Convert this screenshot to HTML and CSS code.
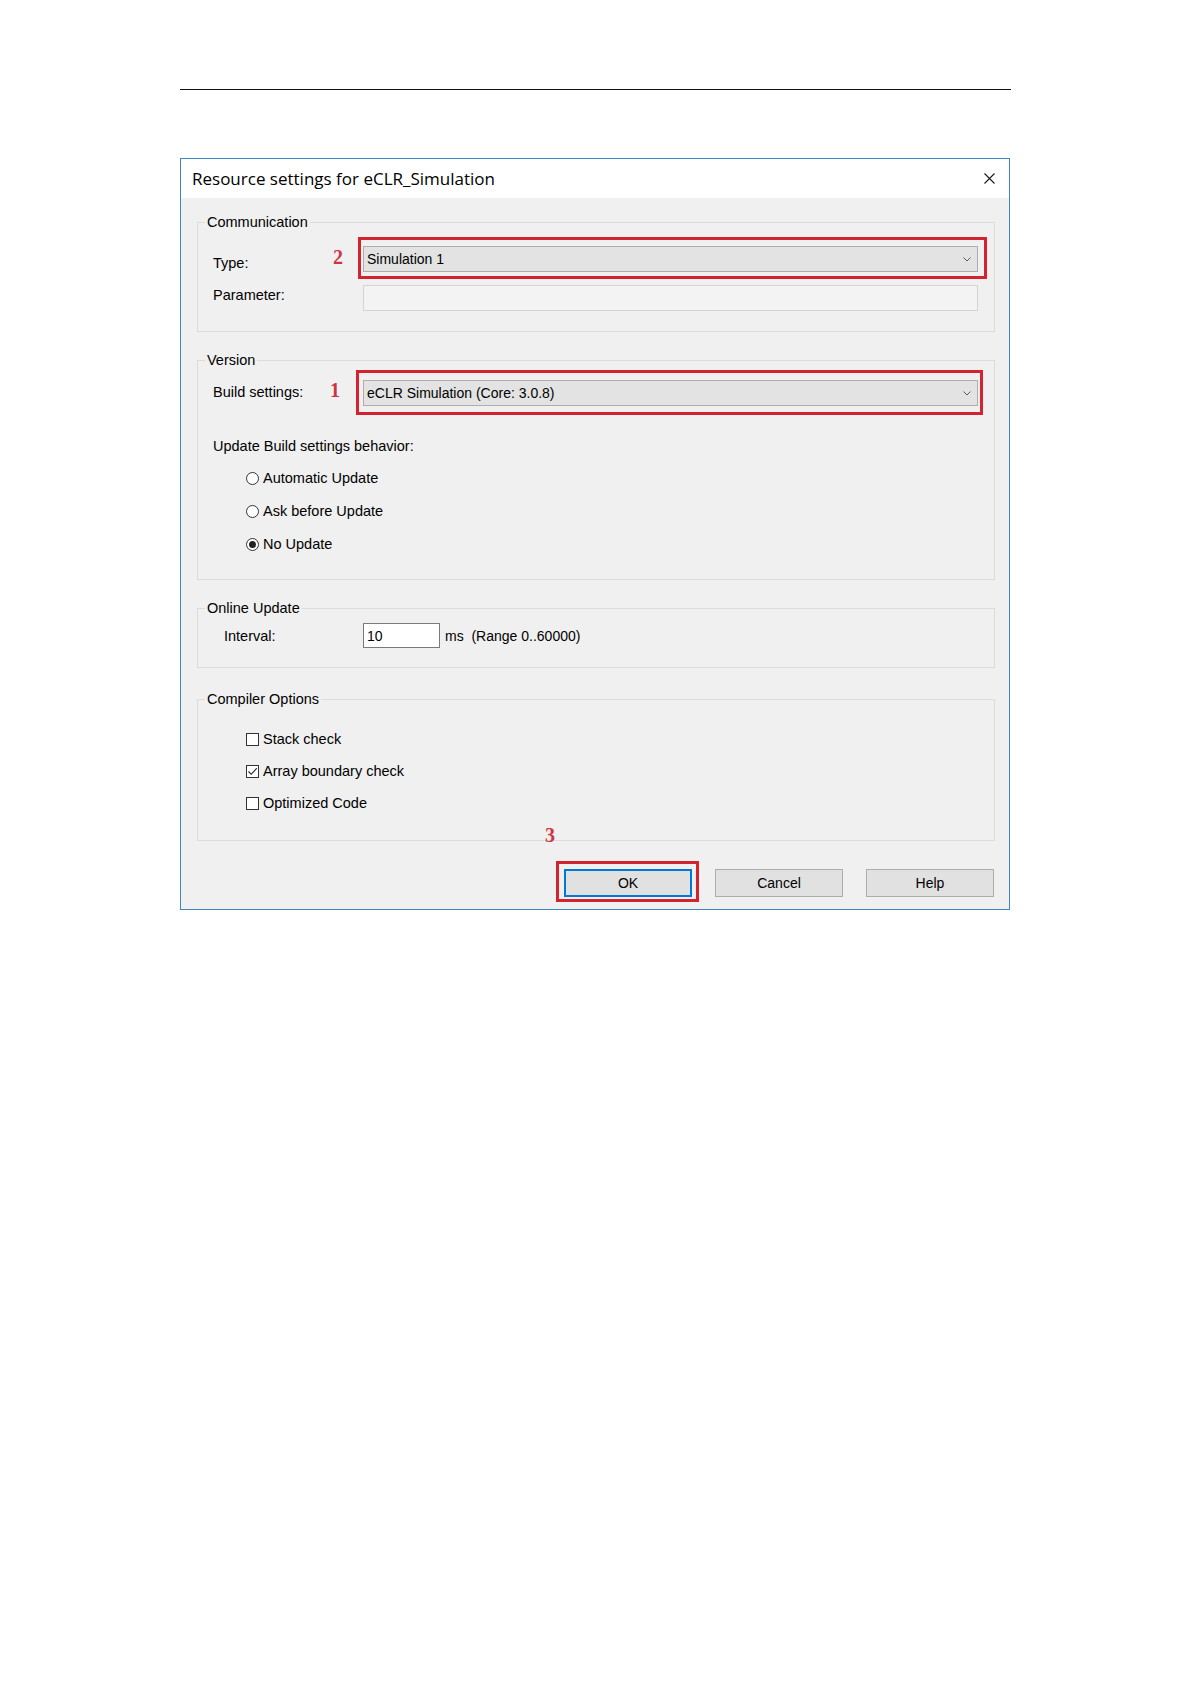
FILE: index.html
```html
<!DOCTYPE html>
<html lang="en">
<head>
    <meta charset="UTF-8">
    <meta name="viewport" content="width=device-width, initial-scale=1.0">
    <title>Resource settings for eCLR_Simulation</title>
    <link rel="stylesheet" href="styles.css">
</head>
<body>
    <div class="page">
        <div class="rule"></div>

        <div class="dialog">
            <div class="titlebar">
                <span class="title">Resource settings for eCLR_Simulation</span>
                <svg class="close" width="11" height="11" viewBox="0 0 11 11">
                    <path d="M0.5 0.5L10.5 10.5M10.5 0.5L0.5 10.5" stroke="#1a1a1a" stroke-width="1.1" fill="none"/>
                </svg>
            </div>

            <div class="content">
                <!-- Communication -->
                <div class="group comm">
                    <div class="legend">Communication</div>
                    <div class="row type-row">
                        <span class="label type-label">Type:</span>
                        <span class="mark mark-2">2</span>
                        <div class="combo callout callout-type">
                            <span>Simulation 1</span>
                            <svg width="8" height="5" viewBox="0 0 8 5"><path d="M0.5 0.5L4 4L7.5 0.5" stroke="#5a5a5a" fill="none"/></svg>
                        </div>
                    </div>
                    <div class="row param-row">
                        <span class="label wide param-label">Parameter:</span>
                        <div class="field"></div>
                    </div>
                </div>

                <!-- Version -->
                <div class="group version">
                    <div class="legend">Version</div>
                    <div class="row build-row">
                        <span class="label build-label">Build settings:</span>
                        <span class="mark mark-1">1</span>
                        <div class="combo callout callout-build">
                            <span>eCLR Simulation (Core: 3.0.8)</span>
                            <svg width="8" height="5" viewBox="0 0 8 5"><path d="M0.5 0.5L4 4L7.5 0.5" stroke="#5a5a5a" fill="none"/></svg>
                        </div>
                    </div>
                    <div class="behavior">Update Build settings behavior:</div>
                    <div class="options radios">
                        <div class="option"><span class="radio"></span>Automatic Update</div>
                        <div class="option"><span class="radio"></span>Ask before Update</div>
                        <div class="option"><span class="radio on"></span>No Update</div>
                    </div>
                </div>

                <!-- Online Update -->
                <div class="group online">
                    <div class="legend">Online Update</div>
                    <div class="row interval-row">
                        <span class="label interval-label">Interval:</span>
                        <input class="num" type="text" value="10" readonly>
                        <span class="unit">ms&nbsp;&nbsp;(Range 0..60000)</span>
                    </div>
                </div>

                <!-- Compiler Options -->
                <div class="group compiler">
                    <div class="legend">Compiler Options</div>
                    <div class="options checks">
                        <div class="option"><span class="check"></span>Stack check</div>
                        <div class="option">
                            <span class="check">
                                <svg width="11" height="11" viewBox="0 0 11 11"><path d="M1.5 5.5L4.2 8.3L9.8 2.2" stroke="#222" stroke-width="1.1" fill="none"/></svg>
                            </span>Array boundary check
                        </div>
                        <div class="option"><span class="check"></span>Optimized Code</div>
                    </div>
                </div>

                <div class="buttons">
                    <div class="btn default callout callout-ok">
                        <span class="mark mark-3">3</span>
                        OK
                    </div>
                    <div class="btn">Cancel</div>
                    <div class="btn">Help</div>
                </div>
            </div>
        </div>
    </div>
</body>
</html>
```

FILE: styles.css
```css
body {
    margin: 0;
    background: #fff;
    font-family: "Liberation Sans", Arial, sans-serif;
    font-size: 14.5px;
    line-height: 17px;
    color: #000;
}

.page {
    width: 831px;
    margin-left: 180px;
    padding-top: 89px;
}

.rule {
    height: 1px;
    background: #111;
}

.dialog {
    box-sizing: border-box;
    width: 830px;
    margin-top: 68px;
    border: 1px solid #3f86c4;
    background: #f0f0f0;
}

.titlebar {
    height: 39px;
    background: #fff;
    display: flex;
    align-items: center;
    justify-content: space-between;
    padding: 0 14px 0 11px;
}

.title {
    font-family: "Open Sans", "Noto Sans", sans-serif;
    font-size: 17px;
    color: #000;
}

.content {
    padding: 24px 14px 12px 16px;
}

/* group boxes */
.group {
    border: 1px solid #dcdcdc;
    padding: 0 16px 0 15px;
}

.legend {
    display: block;
    width: max-content;
    margin: -9px 0 0 -8px;
    padding: 0 2px;
    background: #f0f0f0;
}

.comm { padding-bottom: 20px; }
.version { margin-top: 28px; padding-bottom: 26px; }
.online { margin-top: 28px; padding-bottom: 19px; }
.compiler { margin-top: 31px; padding-bottom: 28px; }

.row {
    display: flex;
    align-items: flex-start;
}

.type-row { margin-top: 15px; }
.param-row { margin-top: 13px; }
.build-row { margin-top: 11px; }
.interval-row { margin-top: 6px; }

.label {
    flex: none;
    width: 120px;
}

.label.wide { width: 150px; }

.type-label { padding-top: 9px; }
.param-label { padding-top: 2px; }
.build-label { padding-top: 4px; }

.interval-label {
    width: 139px;
    margin-left: 11px;
    padding-top: 5px;
}

/* red annotation numbers */
.mark {
    flex: none;
    width: 30px;
    font-family: "Liberation Serif", "Times New Roman", serif;
    font-size: 20px;
    font-weight: bold;
    line-height: 26px;
    color: #cf3440;
}

.mark-2 { margin-top: -2px; }

.mark-1 {
    width: 33px;
    margin: -3px 0 0 -3px;
}

.mark-3 {
    position: absolute;
    left: -21px;
    top: -46px;
    width: auto;
    line-height: 20px;
}

.combo {
    flex: 1;
    box-sizing: border-box;
    height: 26px;
    border: 1px solid #adadad;
    background: #e3e3e3;
    display: flex;
    align-items: center;
    justify-content: space-between;
    padding: 0 6px 0 3px;
    font-size: 14px;
}

.field {
    flex: 1;
    box-sizing: border-box;
    height: 26px;
    border: 1px solid #d4d4d4;
    background: #f3f3f3;
}

/* red annotation frames */
.callout {
    position: relative;
}

.callout::after {
    content: "";
    position: absolute;
    border: 3px solid #d3232e;
    pointer-events: none;
}

.callout-type::after { top: -10px; left: -6px; right: -10px; bottom: -8px; }
.callout-build::after { top: -11px; left: -8px; right: -6px; bottom: -10px; }
.callout-ok::after { top: -10px; left: -10px; right: -9px; bottom: -7px; }

.behavior {
    margin-top: 32px;
}

.options {
    margin-left: 33px;
    display: flex;
    flex-direction: column;
}

.radios { margin-top: 15px; gap: 16px; }
.checks { margin-top: 23px; gap: 15px; }

.option {
    display: flex;
    align-items: center;
    height: 17px;
}

.radio,
.check {
    box-sizing: border-box;
    width: 13px;
    height: 13px;
    margin-right: 4px;
    border: 1px solid #333;
    background: #fff;
    display: flex;
    align-items: center;
    justify-content: center;
}

.radio { border-radius: 50%; }

.radio.on::after {
    content: "";
    width: 7px;
    height: 7px;
    border-radius: 50%;
    background: #222;
}

.num {
    box-sizing: border-box;
    width: 77px;
    height: 25px;
    margin: 0;
    padding: 3px 3px;
    border: 1px solid #7a7a7a;
    background: #fff;
    font-family: "Liberation Sans", Arial, sans-serif;
    font-size: 14px;
    line-height: 17px;
    color: #000;
    outline: none;
}

.unit {
    margin-left: 5px;
    padding-top: 5px;
    font-size: 14px;
}

.buttons {
    display: flex;
    justify-content: flex-end;
    gap: 23px;
    margin-top: 28px;
    margin-right: 1px;
}

.btn {
    box-sizing: border-box;
    width: 128px;
    height: 28px;
    border: 1px solid #adadad;
    background: #e1e1e1;
    display: flex;
    align-items: center;
    justify-content: center;
    font-size: 14px;
}

.btn.default {
    border: 2px solid #0078d7;
}
```
